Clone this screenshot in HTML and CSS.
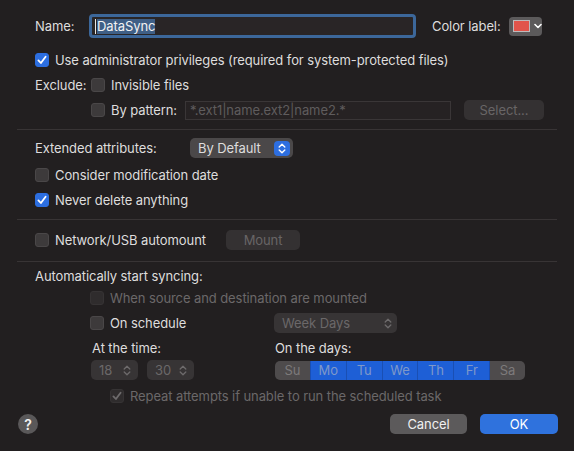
FILE: index.html
```html
<!DOCTYPE html>
<html lang="en">
<head>
  <meta charset="UTF-8">
  <title>Sync Settings</title>
  <link rel="stylesheet" href="styles.css">
</head>
<body>
  <div class="dialog">
    <div class="section">
      <div class="row name-row">
        <span class="lbl name-lbl">Name:</span>
        <div class="field focused"><span class="caret"></span><span class="sel">DataSync</span></div>
        <span class="lbl color-lbl">Color label:</span>
        <div class="swatch-btn">
          <span class="swatch"></span>
          <svg class="chev" width="8" height="6" viewBox="0 0 8 6"><path d="M1 1.5 L4 4.5 L7 1.5" fill="none" stroke="#fff" stroke-width="1.6" stroke-linecap="round" stroke-linejoin="round"/></svg>
        </div>
      </div>

      <div class="row r-admin">
        <span class="cb on"><svg width="14" height="14" viewBox="0 0 14 14"><path d="M3.4 7.4 L5.9 10 L10.6 3.8" fill="none" stroke="#fff" stroke-width="1.8" stroke-linecap="round" stroke-linejoin="round"/></svg></span>
        Use administrator privileges (required for system-protected files)
      </div>

      <div class="row r-exclude">
        <span class="lbl exclude-lbl">Exclude:</span>
        <span class="cb"></span>Invisible files
      </div>

      <div class="row r-pattern">
        <span class="cb"></span><span class="lbl pattern-lbl">By pattern:</span>
        <div class="pattern-field">*.ext1|name.ext2|name2.*</div>
        <span class="btn off select-btn">Select...</span>
      </div>
    </div>

    <div class="divider d1"></div>

    <div class="section">
      <div class="row r-ext">
        <span class="lbl ext-lbl">Extended attributes:</span>
        <div class="popup">
          By Default
          <span class="stepper-blue">
            <svg width="8" height="11" viewBox="0 0 8 11"><path d="M1.2 4 L4 1.3 L6.8 4 M1.2 7 L4 9.7 L6.8 7" fill="none" stroke="#fff" stroke-width="1.4" stroke-linecap="round" stroke-linejoin="round"/></svg>
          </span>
        </div>
      </div>

      <div class="row r-consider"><span class="cb"></span>Consider modification date</div>

      <div class="row r-never">
        <span class="cb on"><svg width="14" height="14" viewBox="0 0 14 14"><path d="M3.4 7.4 L5.9 10 L10.6 3.8" fill="none" stroke="#fff" stroke-width="1.8" stroke-linecap="round" stroke-linejoin="round"/></svg></span>
        Never delete anything
      </div>
    </div>

    <div class="divider d2"></div>

    <div class="section">
      <div class="row r-net">
        <span class="cb"></span><span class="lbl net-lbl">Network/USB automount</span>
        <span class="btn off mount-btn">Mount</span>
      </div>
    </div>

    <div class="divider d3"></div>

    <div class="section">
      <div class="row r-auto">Automatically start syncing:</div>

      <div class="row r-when dim">
        <span class="cb dis"></span>When source and destination are mounted
      </div>

      <div class="row r-sched">
        <div class="col-a"><span class="cb"></span>On schedule</div>
        <div class="popup dis week">
          Week Days
          <svg width="8" height="11" viewBox="0 0 8 11"><path d="M1.2 4 L4 1.3 L6.8 4 M1.2 7 L4 9.7 L6.8 7" fill="none" stroke="#6e6b6c" stroke-width="1.3" stroke-linecap="round" stroke-linejoin="round"/></svg>
        </div>
      </div>

      <div class="row r-heads">
        <div class="col-a head-time">At the time:</div>
        <div class="head-days">On the days:</div>
      </div>

      <div class="row r-ctrls">
        <div class="col-a times">
          <div class="spin">18
            <svg width="8" height="11" viewBox="0 0 8 11"><path d="M1.2 4 L4 1.3 L6.8 4 M1.2 7 L4 9.7 L6.8 7" fill="none" stroke="#6e6b6c" stroke-width="1.3" stroke-linecap="round" stroke-linejoin="round"/></svg>
          </div>
          <div class="spin">30
            <svg width="8" height="11" viewBox="0 0 8 11"><path d="M1.2 4 L4 1.3 L6.8 4 M1.2 7 L4 9.7 L6.8 7" fill="none" stroke="#6e6b6c" stroke-width="1.3" stroke-linecap="round" stroke-linejoin="round"/></svg>
          </div>
        </div>
        <div class="days">
          <span class="day">Su</span>
          <span class="day sel">Mo</span>
          <span class="day sel">Tu</span>
          <span class="day sel">We</span>
          <span class="day sel">Th</span>
          <span class="day sel">Fr</span>
          <span class="day">Sa</span>
        </div>
      </div>

      <div class="row r-repeat dim">
        <span class="cb dis"><svg width="14" height="14" viewBox="0 0 14 14"><path d="M3.4 7.4 L5.9 10 L10.6 3.8" fill="none" stroke="#6e6b6c" stroke-width="1.8" stroke-linecap="round" stroke-linejoin="round"/></svg></span>
        Repeat attempts if unable to run the scheduled task
      </div>
    </div>

    <div class="footer">
      <span class="help">?</span>
      <span class="btn cancel">Cancel</span>
      <span class="btn ok">OK</span>
    </div>
  </div>
</body>
</html>
```

FILE: styles.css
```css
body {
  margin: 0;
  background: #221f20;
  color: #dedddd;
  font-family: Inter, "Liberation Sans", sans-serif;
  font-size: 13px;
  letter-spacing: -0.09px;
  overflow: hidden;
}
.dialog {
  padding: 14px 17px 0;
}
.section {
  padding-left: 18px;
}
.row {
  display: flex;
  align-items: center;
  height: 20px;
  white-space: nowrap;
}
.lbl {
  flex: none;
}

/* checkboxes */
.cb {
  flex: none;
  width: 14px;
  height: 14px;
  box-sizing: border-box;
  border-radius: 3px;
  background: #3d3a3b;
  border: 1px solid #4a4748;
  margin-right: 6px;
  display: flex;
}
.cb.on {
  background: #2c6ee0;
  border-color: #2c6ee0;
}
.cb.on svg {
  margin: -1px;
}
.cb.dis {
  background: #2f2c2d;
  border-color: #363334;
}
.cb.dis svg {
  margin: -1px;
}
.dim {
  color: #6b6869;
}

/* name row */
.name-row {
  height: 24px;
}
.name-lbl {
  width: 54px;
}
.field {
  box-sizing: border-box;
  width: 327px;
  height: 24px;
  background: #292526;
  border-radius: 4px;
  display: flex;
  align-items: center;
  padding-left: 5px;
}
.field.focused {
  border: 3px solid #3c679a;
  padding-left: 3px;
}
.caret {
  width: 1px;
  height: 15px;
  background: #e6e6e6;
  margin-right: 1px;
}
.sel {
  background: #3f5f86;
  color: #f2f2f2;
  line-height: 15px;
}
.color-lbl {
  margin-left: 16px;
}
.swatch-btn {
  margin-left: auto;
  margin-right: 15px;
  width: 33px;
  height: 19px;
  background: #5c5a5b;
  border-radius: 4px;
  display: flex;
  align-items: center;
  padding-left: 4px;
  box-sizing: border-box;
}
.swatch {
  width: 17px;
  height: 12px;
  box-sizing: border-box;
  background: #e1544b;
  border: 1px solid #bdbabb;
}
.chev {
  margin-left: 4px;
}

.r-admin {
  margin-top: 12px;
}
.r-exclude {
  margin-top: 5px;
}
.exclude-lbl {
  width: 56px;
}
.r-pattern {
  margin-top: 5px;
  padding-left: 56px;
}
.pattern-lbl {
  width: 74px;
}
.pattern-field {
  width: 266px;
  height: 19px;
  box-sizing: border-box;
  border: 1px solid #3a3637;
  background: #262223;
  color: #5f5c5d;
  padding-left: 4px;
  line-height: 17px;
}

/* buttons */
.btn {
  flex: none;
  display: flex;
  align-items: center;
  justify-content: center;
  height: 20px;
  border-radius: 5px;
  box-sizing: border-box;
}
.btn.off {
  background: #343132;
  color: #686566;
}
.select-btn {
  margin-left: 13px;
  width: 80px;
}
.net-lbl {
  width: 171px;
}
.mount-btn {
  width: 74px;
}

.divider {
  height: 1px;
  background: #383435;
}
.d1 {
  margin-top: 9px;
}
.d2 {
  margin-top: 9px;
}
.d3 {
  margin-top: 11px;
}

/* popups */
.popup {
  display: flex;
  align-items: center;
  justify-content: space-between;
  box-sizing: border-box;
  height: 20px;
  border-radius: 5px;
  background: #4b4849;
  padding: 0 3px 0 8px;
}
.r-ext {
  margin-top: 8px;
}
.ext-lbl {
  width: 155px;
}
.r-ext .popup {
  width: 103px;
}
.stepper-blue {
  width: 16px;
  height: 15px;
  border-radius: 4px;
  background: #2d6ee0;
  display: flex;
  align-items: center;
  justify-content: center;
}
.r-consider {
  margin-top: 7px;
}
.r-never {
  margin-top: 5px;
}
.r-net {
  margin-top: 10px;
}

/* schedule */
.r-auto {
  margin-top: 4px;
}
.r-when {
  margin-top: 2px;
  padding-left: 55px;
}
.r-sched {
  margin-top: 5px;
  padding-left: 55px;
}
.col-a {
  display: flex;
  align-items: center;
  width: 184px;
  flex: none;
}
.popup.dis {
  background: #373435;
  color: #6b6869;
  padding: 0 5px 0 8px;
}
.week {
  width: 123px;
}
.r-heads {
  margin-top: 5px;
  padding-left: 57px;
}
.head-time {
  width: 183px;
}
.r-ctrls {
  margin-top: 2px;
  padding-left: 56px;
}
.times {
  gap: 9px;
}
.spin {
  display: flex;
  align-items: center;
  justify-content: space-between;
  width: 47px;
  height: 20px;
  box-sizing: border-box;
  padding: 0 7px 0 8px;
  border-radius: 5px;
  background: #373435;
  color: #6b6869;
}
.days {
  display: flex;
  width: 250px;
  height: 19px;
  border-radius: 5px;
  overflow: hidden;
  background: #4e4b4c;
}
.day {
  flex: 1;
  display: flex;
  align-items: center;
  justify-content: center;
  color: #7d7a7b;
}
.day.sel {
  background: #1e5fd6;
  color: #7e98c9;
  border-left: 1px solid #1a4fb3;
}
.day.sel + .day:not(.sel) {
  border-left: 1px solid #1a4fb3;
}
.r-repeat {
  margin-top: 6px;
  padding-left: 75px;
}

/* footer */
.footer {
  display: flex;
  align-items: center;
  margin-top: 8px;
  height: 20px;
}
.help {
  width: 20px;
  height: 20px;
  border-radius: 50%;
  background: #5a5859;
  color: #f2f2f2;
  font-weight: 600;
  font-size: 14px;
  display: flex;
  align-items: center;
  justify-content: center;
  margin-left: 1px;
}
.cancel {
  margin-left: auto;
  width: 77px;
  background: #5c5a5b;
  color: #f0f0f0;
}
.ok {
  margin-left: 13px;
  margin-right: -1px;
  width: 78px;
  background: #2f72dd;
  color: #fff;
}
```
